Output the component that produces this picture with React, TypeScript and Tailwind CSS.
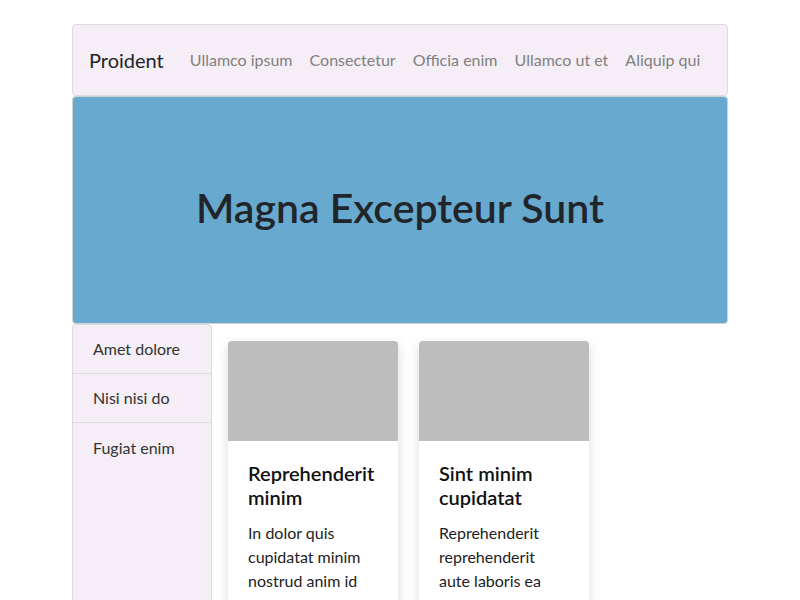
export default function App() {
  const links = ["Ullamco ipsum", "Consectetur", "Officia enim", "Ullamco ut et", "Aliquip qui"];
  const side = ["Amet dolore", "Nisi nisi do", "Fugiat enim"];
  const cards = [
    { t: "Reprehenderit minim", b: "In dolor quis cupidatat minim nostrud anim id culpa" },
    { t: "Sint minim cupidatat", b: "Reprehenderit reprehenderit aute laboris ea culpa" },
  ];
  return (
    <div className="w-[800px] h-[600px] overflow-hidden bg-white text-[#212529]" style={{ fontFamily: 'Lato, sans-serif' }}>
      <div className="w-[656px] mx-auto pt-6">
        <nav className="h-[72px] flex items-center px-4 bg-[#f5eef6] border border-[#dcdcdc] rounded">
          <span className="text-[20px] text-[#212529] mr-[26px] whitespace-nowrap">Proident</span>
          <div className="flex gap-[17px]">
            {links.map((l) => (
              <span key={l} className="text-[16px] text-[#808080] whitespace-nowrap">{l}</span>
            ))}
          </div>
        </nav>
        <section className="h-[228px] flex items-center justify-center bg-[#67a9cf] border border-[#d0d0d0] rounded pb-1">
          <h1 className="text-[41px] font-semibold text-[#212529]">Magna Excepteur Sunt</h1>
        </section>
        <div className="flex">
          <aside className="w-[140px] h-[300px] shrink-0 bg-[#f5eef6] border border-[#dcdcdc] rounded-t">
            {side.map((s, i) => (
              <div key={s} className={`h-[49px] flex items-center pl-5 text-[16px] text-[#333] ${i < 2 ? "border-b border-[#dcdcdc]" : ""}`}>{s}</div>
            ))}
          </aside>
          <main className="flex gap-[21px] pl-4 pt-[17px]">
            {cards.map((c) => (
              <div key={c.t} className="w-[170px] h-[300px] rounded bg-white shadow-[0_4px_12px_rgba(0,0,0,0.15)] overflow-hidden">
                <div className="h-[100px] bg-[#bdbdbd]" />
                <div className="p-5">
                  <h2 className="text-[20px] leading-6 font-semibold text-[#111] mb-3">{c.t}</h2>
                  <p className="text-[16px] leading-6 text-[#222]">{c.b}</p>
                </div>
              </div>
            ))}
          </main>
        </div>
      </div>
    </div>
  );
}
